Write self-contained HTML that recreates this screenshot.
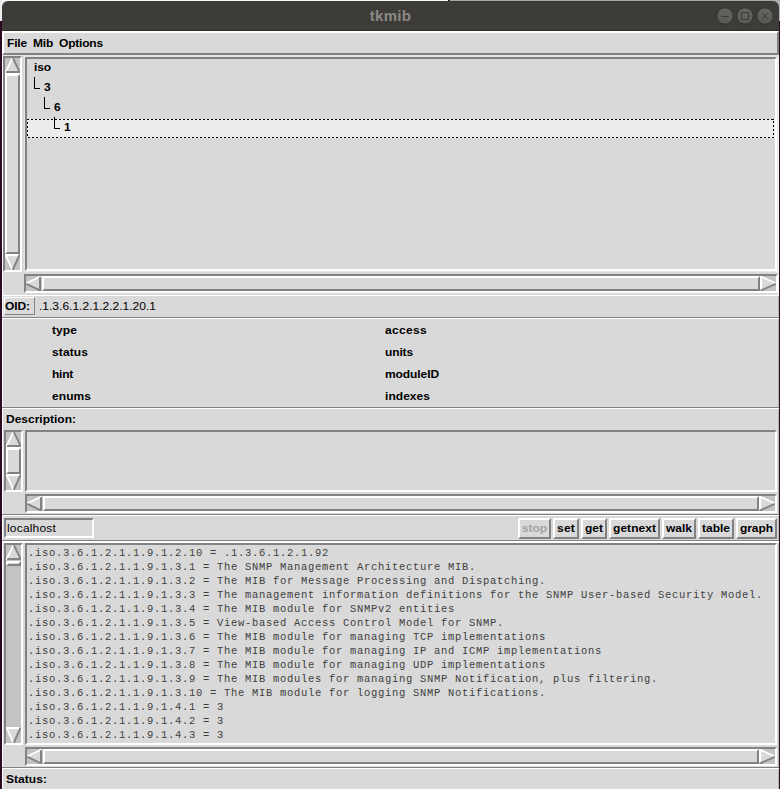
<!DOCTYPE html>
<html><head><meta charset="utf-8"><title>tkmib</title>
<style>
html,body{margin:0;padding:0;}
body{width:780px;height:789px;position:relative;overflow:hidden;background:#2b0a22;font-family:"Liberation Sans",sans-serif;}
div,span,svg{position:absolute;box-sizing:content-box;}
span{white-space:pre;line-height:14px;font-size:12px;color:#000;}
.b{font-weight:bold;transform:scaleY(0.92);transform-origin:0 11px;}
.r{font-weight:normal;transform:scaleY(0.92);transform-origin:0 11px;}
.m{font-family:"Liberation Mono",monospace;font-size:10.5px;letter-spacing:0.7px;color:#404040;}
.title{font-weight:bold;font-size:15px;line-height:30px;text-align:center;color:#8b8a85;letter-spacing:0.3px;}
</style></head><body>
<div style="left:0px;top:0px;width:448px;height:1px;background:#fafafa;"></div>
<div style="left:450px;top:0px;width:330px;height:1px;background:#aaa9a6;"></div>
<div style="left:448px;top:0px;width:2px;height:1px;background:#2a2a28;"></div>
<div style="left:0px;top:0px;width:2px;height:21px;background:#ececec;"></div>
<div style="left:779px;top:1px;width:1px;height:20px;background:#b4b3b2;"></div>
<div style="left:2px;top:1px;width:8px;height:8px;background:#ececec;"></div>
<div style="left:771px;top:1px;width:8px;height:8px;background:#b4b3b2;"></div>
<div style="left:2px;top:1px;width:777px;height:30px;background:#3d3c38;border-radius:6px 6px 0 0;"></div>
<div style="left:2px;top:30px;width:777px;height:1px;background:#2d2c29;"></div>
<div style="left:8px;top:1px;width:765px;height:1px;background:#35342f;"></div>
<span class="title" style="left:2px;top:1px;width:777px;">tkmib</span>
<svg style="left:716px;top:7px" width="18" height="18" viewBox="0 0 18 18"><defs><linearGradient id="g725" x1="0" y1="0" x2="0" y2="1"><stop offset="0" stop-color="#66655f"/><stop offset="1" stop-color="#5a5954"/></linearGradient></defs><circle cx="9" cy="9" r="8.2" fill="url(#g725)" stroke="#33322f" stroke-width="1"/><path d="M5,9.5 H13" stroke="#3a3935" stroke-width="1"/></svg>
<svg style="left:736px;top:7px" width="18" height="18" viewBox="0 0 18 18"><defs><linearGradient id="g745" x1="0" y1="0" x2="0" y2="1"><stop offset="0" stop-color="#66655f"/><stop offset="1" stop-color="#5a5954"/></linearGradient></defs><circle cx="9" cy="9" r="8.2" fill="url(#g745)" stroke="#33322f" stroke-width="1"/><rect x="5.5" y="5.5" width="7" height="7" fill="none" stroke="#3a3935" stroke-width="1"/></svg>
<svg style="left:756px;top:7px" width="18" height="18" viewBox="0 0 18 18"><defs><linearGradient id="g765" x1="0" y1="0" x2="0" y2="1"><stop offset="0" stop-color="#66655f"/><stop offset="1" stop-color="#5a5954"/></linearGradient></defs><circle cx="9" cy="9" r="8.2" fill="url(#g765)" stroke="#33322f" stroke-width="1"/><path d="M5.8,5.8 L12.2,12.2 M12.2,5.8 L5.8,12.2" stroke="#3a3935" stroke-width="1"/></svg>
<div style="left:2px;top:31px;width:777px;height:758px;background:#d9d9d9;"></div>
<div style="left:2px;top:31px;width:1px;height:758px;background:#ffffff;"></div>
<div style="left:778px;top:55px;width:1px;height:240px;background:#efefef;"></div>
<div style="left:778px;top:295px;width:1px;height:494px;background:#b8b8b8;"></div>
<div style="left:2px;top:31px;width:773px;height:20px;border-style:solid;border-width:2px;border-color:#ffffff #828282 #828282 #ffffff;background:#d9d9d9;"></div>
<span class="b" style="left:7px;top:36px;letter-spacing:-0.168px;">File</span>
<span class="b" style="left:33px;top:36px;letter-spacing:-0.220px;">Mib</span>
<span class="b" style="left:59px;top:36px;letter-spacing:-0.190px;">Options</span>
<div style="left:3px;top:56px;width:15px;height:212px;border-style:solid;border-width:2px;border-color:#828282 #ffffff #ffffff #828282;background:#c3c3c3;"></div>
<svg style="left:5px;top:58px" width="15" height="15" viewBox="0 0 15 15" preserveAspectRatio="none"><polygon points="7.5,0 15,15 0,15" fill="#d9d9d9"/><path d="M7.3,0.3 L0.3,14.6" stroke="#ffffff" stroke-width="1.7" fill="none"/><path d="M7.9,0.2 L14.7,14.2" stroke="#828282" stroke-width="1.9" fill="none"/><path d="M1.2,14 L15,14" stroke="#828282" stroke-width="2" fill="none"/></svg>
<svg style="left:5px;top:254px" width="15" height="16" viewBox="0 0 15 15" preserveAspectRatio="none"><polygon points="0,0 15,0 7.5,15" fill="#d9d9d9"/><path d="M0,1 L14,1" stroke="#ffffff" stroke-width="2" fill="none"/><path d="M0.4,0.6 L7.2,14.6" stroke="#ffffff" stroke-width="1.7" fill="none"/><path d="M14.6,0.6 L7.8,14.8" stroke="#828282" stroke-width="1.9" fill="none"/></svg>
<div style="left:5px;top:73px;width:15px;height:1px;background:#ffffff;"></div>
<div style="left:5px;top:74px;width:11px;height:176px;border-style:solid;border-width:2px;border-color:#ffffff #828282 #828282 #ffffff;background:#d9d9d9;"></div>
<div style="left:2px;top:55px;width:777px;height:1px;background:#e6e6e6;"></div>
<div style="left:24px;top:56px;width:752px;height:214px;border:1px solid #e6e6e6;"></div>
<div style="left:25px;top:57px;width:748px;height:210px;border-style:solid;border-width:2px;border-color:#828282 #ffffff #ffffff #828282;background:#d9d9d9;"></div>
<div style="left:27px;top:119px;width:748px;height:19px;background:#ececec;"></div>
<div style="left:27px;top:119px;width:747px;height:1px;background:repeating-linear-gradient(90deg,#000 0 2px,transparent 2px 4px);"></div>
<div style="left:28px;top:137px;width:746px;height:1px;background:repeating-linear-gradient(90deg,#000 0 2px,transparent 2px 4px);"></div>
<div style="left:27px;top:119px;width:1px;height:19px;background:repeating-linear-gradient(180deg,#000 0 1px,transparent 1px 3px,#000 3px 4px);"></div>
<div style="left:773px;top:119px;width:1px;height:19px;background:repeating-linear-gradient(180deg,transparent 0 2px,#000 2px 4px);"></div>
<div style="left:773px;top:119px;width:1px;height:1px;background:#000;"></div>
<span class="b" style="left:34px;top:60px;letter-spacing:-0.113px;">iso</span>
<div style="left:34px;top:77px;width:1px;height:12px;background:#000;"></div>
<div style="left:34px;top:88px;width:6px;height:1px;background:#000;"></div>
<span class="b" style="left:44px;top:80px;letter-spacing:0.326px;">3</span>
<div style="left:44px;top:97px;width:1px;height:12px;background:#000;"></div>
<div style="left:44px;top:108px;width:6px;height:1px;background:#000;"></div>
<span class="b" style="left:54px;top:100px;letter-spacing:0.326px;">6</span>
<div style="left:54px;top:117px;width:1px;height:12px;background:#000;"></div>
<div style="left:54px;top:128px;width:6px;height:1px;background:#000;"></div>
<span class="b" style="left:64px;top:120px;letter-spacing:0.326px;">1</span>
<div style="left:24px;top:274px;width:750px;height:15px;border-style:solid;border-width:2px;border-color:#828282 #ffffff #ffffff #828282;background:#c3c3c3;"></div>
<svg style="left:26px;top:276px" width="15" height="15" viewBox="0 0 15 15" preserveAspectRatio="none"><polygon points="0,7.5 15,0 15,15" fill="#d9d9d9"/><path d="M0.3,7.3 L14.6,0.4" stroke="#ffffff" stroke-width="1.7" fill="none"/><path d="M0.3,7.9 L14.4,14.6" stroke="#828282" stroke-width="1.9" fill="none"/><path d="M14,1.2 L14,15" stroke="#828282" stroke-width="2" fill="none"/></svg>
<svg style="left:760px;top:276px" width="16" height="15" viewBox="0 0 15 15" preserveAspectRatio="none"><polygon points="0,0 15,7.5 0,15" fill="#d9d9d9"/><path d="M1,0 L1,14" stroke="#ffffff" stroke-width="2" fill="none"/><path d="M0.4,0.4 L14.6,7.2" stroke="#ffffff" stroke-width="1.7" fill="none"/><path d="M14.8,7.8 L0.6,14.6" stroke="#828282" stroke-width="1.9" fill="none"/></svg>
<div style="left:42px;top:276px;width:714px;height:11px;border-style:solid;border-width:2px;border-color:#ffffff #828282 #828282 #ffffff;background:#d9d9d9;"></div>
<div style="left:2px;top:295px;width:777px;height:1px;background:#ffffff;"></div>
<div style="left:4px;top:297px;width:29px;height:16px;border-style:solid;border-width:1px;border-color:#ffffff #828282 #828282 #ffffff;background:#d9d9d9;"></div>
<span class="b" style="left:5px;top:299px;letter-spacing:-0.083px;">OID:</span>
<span class="r" style="left:39px;top:299px;letter-spacing:0.010px;">.1.3.6.1.2.1.2.2.1.20.1</span>
<div style="left:2px;top:317px;width:777px;height:1px;background:#828282;"></div>
<div style="left:2px;top:318px;width:777px;height:1px;background:#ffffff;"></div>
<span class="b" style="left:52px;top:323px;letter-spacing:0.082px;">type</span>
<span class="b" style="left:385px;top:323px;letter-spacing:0.326px;">access</span>
<span class="b" style="left:52px;top:345px;letter-spacing:0.109px;">status</span>
<span class="b" style="left:385px;top:345px;letter-spacing:-0.133px;">units</span>
<span class="b" style="left:52px;top:367px;letter-spacing:-0.248px;">hint</span>
<span class="b" style="left:385px;top:367px;letter-spacing:-0.083px;">moduleID</span>
<span class="b" style="left:52px;top:389px;letter-spacing:0.064px;">enums</span>
<span class="b" style="left:385px;top:389px;letter-spacing:0.044px;">indexes</span>
<div style="left:2px;top:407px;width:777px;height:1px;background:#828282;"></div>
<div style="left:2px;top:408px;width:777px;height:1px;background:#ffffff;"></div>
<span class="b" style="left:6px;top:412px;letter-spacing:-0.001px;">Description:</span>
<div style="left:4px;top:430px;width:15px;height:58px;border-style:solid;border-width:2px;border-color:#828282 #ffffff #ffffff #828282;background:#c3c3c3;"></div>
<svg style="left:6px;top:432px" width="15" height="15" viewBox="0 0 15 15" preserveAspectRatio="none"><polygon points="7.5,0 15,15 0,15" fill="#d9d9d9"/><path d="M7.3,0.3 L0.3,14.6" stroke="#ffffff" stroke-width="1.7" fill="none"/><path d="M7.9,0.2 L14.7,14.2" stroke="#828282" stroke-width="1.9" fill="none"/><path d="M1.2,14 L15,14" stroke="#828282" stroke-width="2" fill="none"/></svg>
<svg style="left:6px;top:474px" width="15" height="16" viewBox="0 0 15 15" preserveAspectRatio="none"><polygon points="0,0 15,0 7.5,15" fill="#d9d9d9"/><path d="M0,1 L14,1" stroke="#ffffff" stroke-width="2" fill="none"/><path d="M0.4,0.6 L7.2,14.6" stroke="#ffffff" stroke-width="1.7" fill="none"/><path d="M14.6,0.6 L7.8,14.8" stroke="#828282" stroke-width="1.9" fill="none"/></svg>
<div style="left:6px;top:447px;width:15px;height:1px;background:#ffffff;"></div>
<div style="left:6px;top:448px;width:11px;height:22px;border-style:solid;border-width:2px;border-color:#ffffff #828282 #828282 #ffffff;background:#d9d9d9;"></div>
<div style="left:25px;top:430px;width:748px;height:58px;border-style:solid;border-width:2px;border-color:#828282 #ffffff #ffffff #828282;background:#d9d9d9;"></div>
<div style="left:25px;top:494px;width:748px;height:15px;border-style:solid;border-width:2px;border-color:#828282 #ffffff #ffffff #828282;background:#c3c3c3;"></div>
<svg style="left:27px;top:496px" width="15" height="15" viewBox="0 0 15 15" preserveAspectRatio="none"><polygon points="0,7.5 15,0 15,15" fill="#d9d9d9"/><path d="M0.3,7.3 L14.6,0.4" stroke="#ffffff" stroke-width="1.7" fill="none"/><path d="M0.3,7.9 L14.4,14.6" stroke="#828282" stroke-width="1.9" fill="none"/><path d="M14,1.2 L14,15" stroke="#828282" stroke-width="2" fill="none"/></svg>
<svg style="left:759px;top:496px" width="16" height="15" viewBox="0 0 15 15" preserveAspectRatio="none"><polygon points="0,0 15,7.5 0,15" fill="#d9d9d9"/><path d="M1,0 L1,14" stroke="#ffffff" stroke-width="2" fill="none"/><path d="M0.4,0.4 L14.6,7.2" stroke="#ffffff" stroke-width="1.7" fill="none"/><path d="M14.8,7.8 L0.6,14.6" stroke="#828282" stroke-width="1.9" fill="none"/></svg>
<div style="left:43px;top:496px;width:712px;height:11px;border-style:solid;border-width:2px;border-color:#ffffff #828282 #828282 #ffffff;background:#d9d9d9;"></div>
<div style="left:2px;top:514px;width:777px;height:1px;background:#828282;"></div>
<div style="left:2px;top:515px;width:777px;height:1px;background:#ffffff;"></div>
<div style="left:4px;top:518px;width:86px;height:16px;border-style:solid;border-width:2px;border-color:#828282 #ffffff #ffffff #828282;background:#d9d9d9;"></div>
<span class="r" style="left:7px;top:521px;letter-spacing:0.182px;">localhost</span>
<div style="left:518px;top:518px;width:29px;height:17px;border-style:solid;border-width:2px;border-color:#ffffff #828282 #828282 #ffffff;background:#d9d9d9;"></div>
<span class="b" style="left:522px;top:521px;color:#a3a3a3;letter-spacing:-0.083px;">stop</span>
<div style="left:553px;top:518px;width:22px;height:17px;border-style:solid;border-width:2px;border-color:#ffffff #828282 #828282 #ffffff;background:#d9d9d9;"></div>
<span class="b" style="left:557px;top:521px;letter-spacing:0.219px;">set</span>
<div style="left:581px;top:518px;width:22px;height:17px;border-style:solid;border-width:2px;border-color:#ffffff #828282 #828282 #ffffff;background:#d9d9d9;"></div>
<span class="b" style="left:585px;top:521px;letter-spacing:0.000px;">get</span>
<div style="left:609px;top:518px;width:47px;height:17px;border-style:solid;border-width:2px;border-color:#ffffff #828282 #828282 #ffffff;background:#d9d9d9;"></div>
<span class="b" style="left:613px;top:521px;letter-spacing:0.047px;">getnext</span>
<div style="left:662px;top:518px;width:30px;height:17px;border-style:solid;border-width:2px;border-color:#ffffff #828282 #828282 #ffffff;background:#d9d9d9;"></div>
<span class="b" style="left:666px;top:521px;letter-spacing:-0.004px;">walk</span>
<div style="left:698px;top:518px;width:32px;height:17px;border-style:solid;border-width:2px;border-color:#ffffff #828282 #828282 #ffffff;background:#d9d9d9;"></div>
<span class="b" style="left:702px;top:521px;letter-spacing:-0.002px;">table</span>
<div style="left:736px;top:518px;width:37px;height:17px;border-style:solid;border-width:2px;border-color:#ffffff #828282 #828282 #ffffff;background:#d9d9d9;"></div>
<span class="b" style="left:740px;top:521px;letter-spacing:-0.067px;">graph</span>
<div style="left:2px;top:540px;width:777px;height:1px;background:#828282;"></div>
<div style="left:2px;top:541px;width:777px;height:1px;background:#ffffff;"></div>
<div style="left:2px;top:542px;width:777px;height:1px;background:#ffffff;"></div>
<div style="left:4px;top:543px;width:15px;height:198px;border-style:solid;border-width:2px;border-color:#828282 #ffffff #ffffff #828282;background:#c3c3c3;"></div>
<svg style="left:6px;top:545px" width="15" height="15" viewBox="0 0 15 15" preserveAspectRatio="none"><polygon points="7.5,0 15,15 0,15" fill="#d9d9d9"/><path d="M7.3,0.3 L0.3,14.6" stroke="#ffffff" stroke-width="1.7" fill="none"/><path d="M7.9,0.2 L14.7,14.2" stroke="#828282" stroke-width="1.9" fill="none"/><path d="M1.2,14 L15,14" stroke="#828282" stroke-width="2" fill="none"/></svg>
<svg style="left:6px;top:727px" width="15" height="16" viewBox="0 0 15 15" preserveAspectRatio="none"><polygon points="0,0 15,0 7.5,15" fill="#d9d9d9"/><path d="M0,1 L14,1" stroke="#ffffff" stroke-width="2" fill="none"/><path d="M0.4,0.6 L7.2,14.6" stroke="#ffffff" stroke-width="1.7" fill="none"/><path d="M14.6,0.6 L7.8,14.8" stroke="#828282" stroke-width="1.9" fill="none"/></svg>
<div style="left:6px;top:561px;width:11px;height:1px;border-style:solid;border-width:2px;border-color:#ffffff #828282 #828282 #ffffff;background:#d9d9d9;"></div>
<div style="left:25px;top:543px;width:748px;height:198px;border-style:solid;border-width:2px;border-color:#828282 #ffffff #ffffff #828282;background:#d9d9d9;"></div>
<span class="m" style="left:28px;top:546px;">.iso.3.6.1.2.1.1.9.1.2.10 = .1.3.6.1.2.1.92</span>
<span class="m" style="left:28px;top:560px;">.iso.3.6.1.2.1.1.9.1.3.1 = The SNMP Management Architecture MIB.</span>
<span class="m" style="left:28px;top:574px;">.iso.3.6.1.2.1.1.9.1.3.2 = The MIB for Message Processing and Dispatching.</span>
<span class="m" style="left:28px;top:588px;">.iso.3.6.1.2.1.1.9.1.3.3 = The management information definitions for the SNMP User-based Security Model.</span>
<span class="m" style="left:28px;top:602px;">.iso.3.6.1.2.1.1.9.1.3.4 = The MIB module for SNMPv2 entities</span>
<span class="m" style="left:28px;top:616px;">.iso.3.6.1.2.1.1.9.1.3.5 = View-based Access Control Model for SNMP.</span>
<span class="m" style="left:28px;top:630px;">.iso.3.6.1.2.1.1.9.1.3.6 = The MIB module for managing TCP implementations</span>
<span class="m" style="left:28px;top:644px;">.iso.3.6.1.2.1.1.9.1.3.7 = The MIB module for managing IP and ICMP implementations</span>
<span class="m" style="left:28px;top:658px;">.iso.3.6.1.2.1.1.9.1.3.8 = The MIB module for managing UDP implementations</span>
<span class="m" style="left:28px;top:672px;">.iso.3.6.1.2.1.1.9.1.3.9 = The MIB modules for managing SNMP Notification, plus filtering.</span>
<span class="m" style="left:28px;top:686px;">.iso.3.6.1.2.1.1.9.1.3.10 = The MIB module for logging SNMP Notifications.</span>
<span class="m" style="left:28px;top:700px;">.iso.3.6.1.2.1.1.9.1.4.1 = 3</span>
<span class="m" style="left:28px;top:714px;">.iso.3.6.1.2.1.1.9.1.4.2 = 3</span>
<span class="m" style="left:28px;top:728px;">.iso.3.6.1.2.1.1.9.1.4.3 = 3</span>
<div style="left:25px;top:747px;width:748px;height:15px;border-style:solid;border-width:2px;border-color:#828282 #ffffff #ffffff #828282;background:#c3c3c3;"></div>
<svg style="left:27px;top:749px" width="15" height="15" viewBox="0 0 15 15" preserveAspectRatio="none"><polygon points="0,7.5 15,0 15,15" fill="#d9d9d9"/><path d="M0.3,7.3 L14.6,0.4" stroke="#ffffff" stroke-width="1.7" fill="none"/><path d="M0.3,7.9 L14.4,14.6" stroke="#828282" stroke-width="1.9" fill="none"/><path d="M14,1.2 L14,15" stroke="#828282" stroke-width="2" fill="none"/></svg>
<svg style="left:759px;top:749px" width="16" height="15" viewBox="0 0 15 15" preserveAspectRatio="none"><polygon points="0,0 15,7.5 0,15" fill="#d9d9d9"/><path d="M1,0 L1,14" stroke="#ffffff" stroke-width="2" fill="none"/><path d="M0.4,0.4 L14.6,7.2" stroke="#ffffff" stroke-width="1.7" fill="none"/><path d="M14.8,7.8 L0.6,14.6" stroke="#828282" stroke-width="1.9" fill="none"/></svg>
<div style="left:43px;top:749px;width:712px;height:11px;border-style:solid;border-width:2px;border-color:#ffffff #828282 #828282 #ffffff;background:#d9d9d9;"></div>
<div style="left:2px;top:767px;width:777px;height:1px;background:#828282;"></div>
<div style="left:2px;top:768px;width:777px;height:1px;background:#ffffff;"></div>
<span class="b" style="left:6px;top:772px;letter-spacing:0.047px;">Status:</span>
</body></html>
